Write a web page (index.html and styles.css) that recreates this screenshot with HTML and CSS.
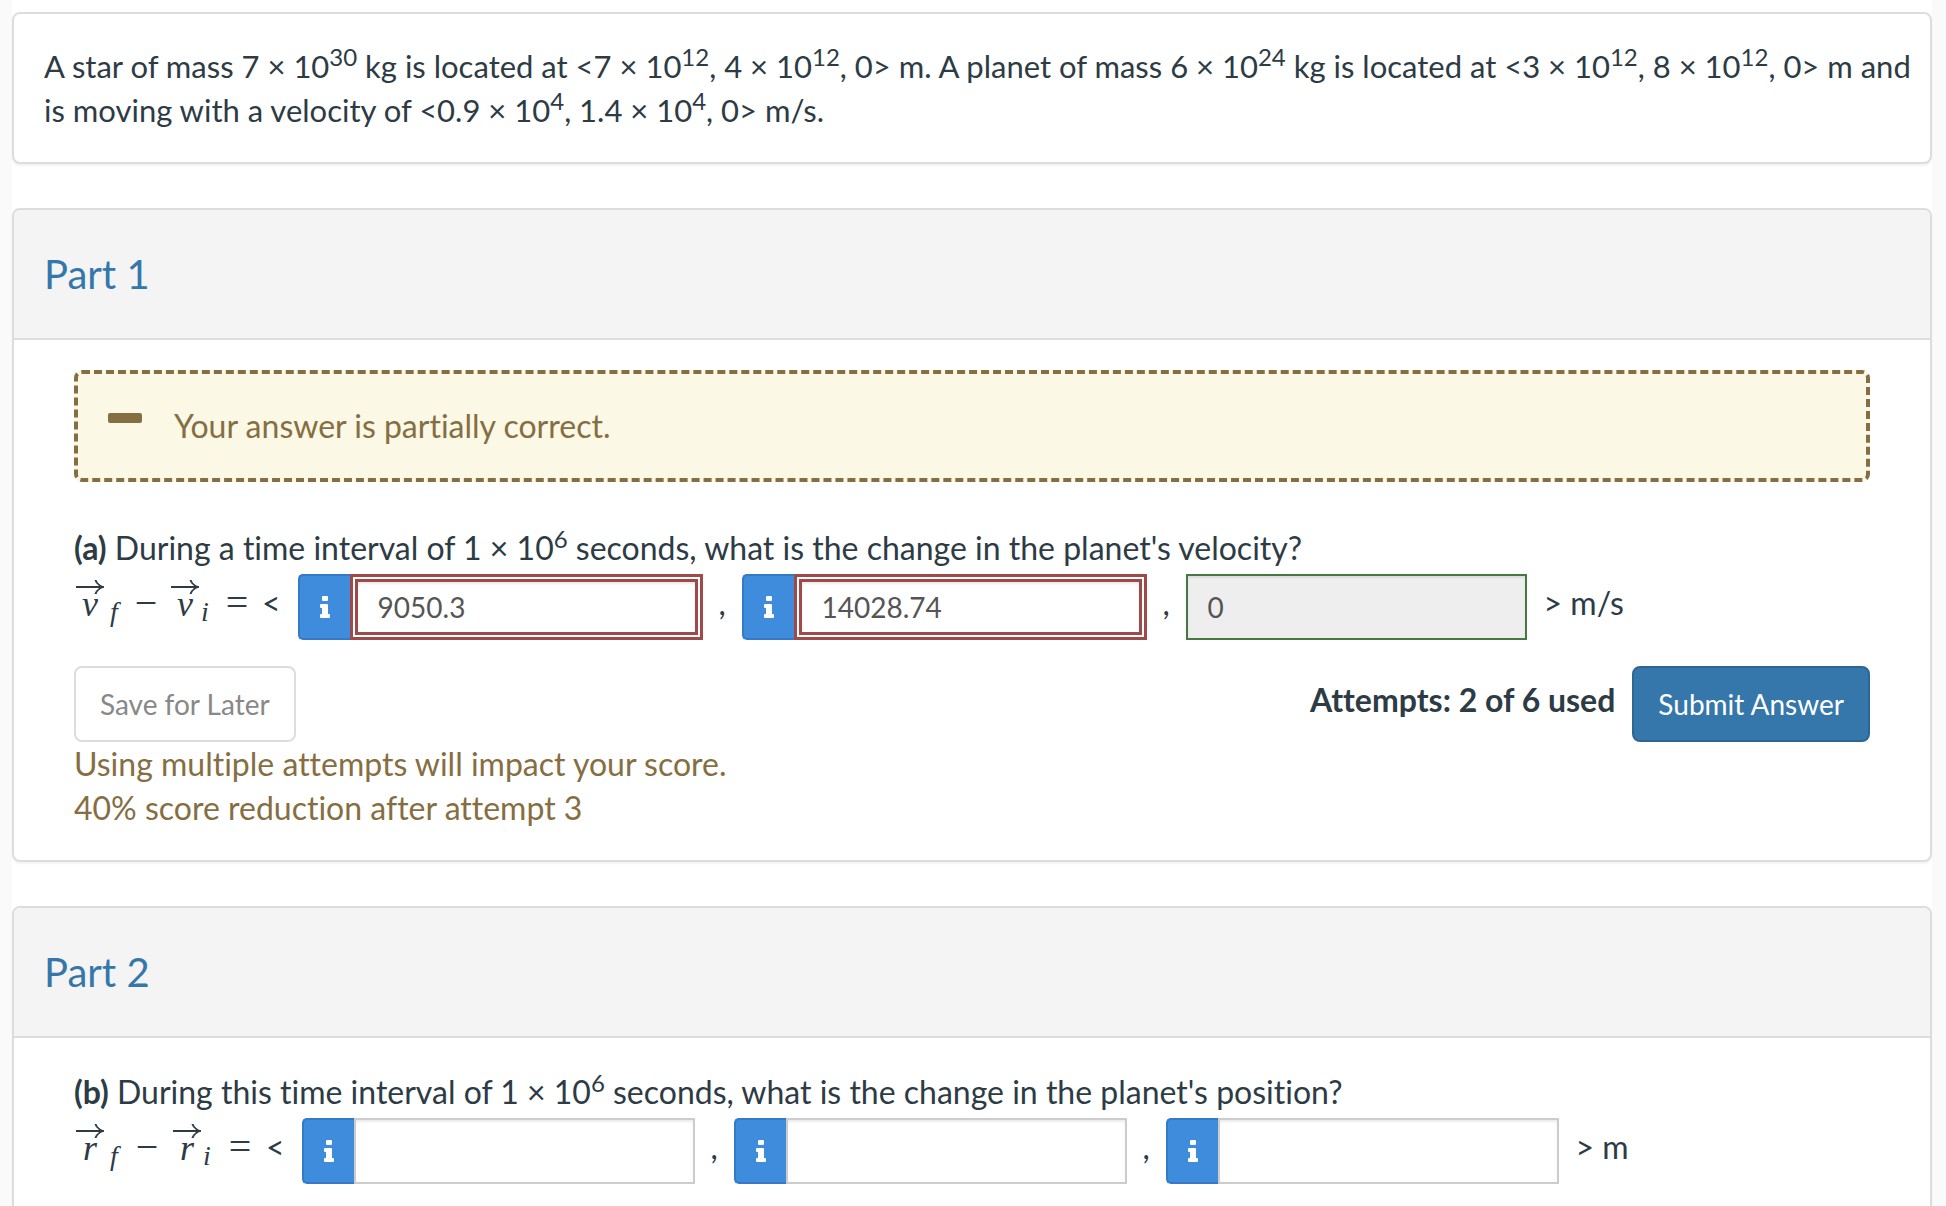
FILE: index.html
```html
<!DOCTYPE html>
<html lang="en">
<head>
<meta charset="utf-8">
<meta name="viewport" content="width=device-width, initial-scale=1">
<title>Planet and star</title>
<link rel="stylesheet" href="styles.css">
</head>
<body>
<svg class="defs" aria-hidden="true">
  <symbol id="arrow" viewBox="0 0 28 14">
    <path d="M0 7H26" fill="none" stroke="currentColor" stroke-width="2"/>
    <path d="M19 0C20 3 22 6 28 7C22 8 20 11 19 14L20 14C21 11 24 8 28 7C24 6 21 3 20 0Z" fill="currentColor" stroke="currentColor"/>
  </symbol>
  <symbol id="info" viewBox="0 0 10 22">
    <rect x="2" y="0" width="6" height="5" rx="1" fill="currentColor"/>
    <path d="M1 8H7Q8 8 8 9V18H9Q10 18 10 19V21Q10 22 9 22H1Q0 22 0 21V19Q0 18 1 18H2V12H1Q0 12 0 11V9Q0 8 1 8Z" fill="currentColor"/>
  </symbol>
</svg>
<main class="page">
  <section class="card statement">
    <p>A star of mass 7 × 10<sup>30</sup> kg is located at &lt;7 × 10<sup>12</sup>, 4 × 10<sup>12</sup>, 0&gt; m. A planet of mass 6 × 10<sup>24</sup> kg is located at &lt;3 × 10<sup>12</sup>, 8 × 10<sup>12</sup>, 0&gt; m and is moving with a velocity of &lt;0.9 × 10<sup>4</sup>, 1.4 × 10<sup>4</sup>, 0&gt; m/s.</p>
  </section>

  <section class="card">
    <header class="card-header"><h2>Part 1</h2></header>
    <div class="card-body">
      <div class="alert" role="status">
        <span class="alert-icon"></span>
        <p>Your answer is partially correct.</p>
      </div>
      <form class="question">
        <p class="prompt"><strong>(a)</strong> During a time interval of 1 × 10<sup>6</sup> seconds, what is the change in the planet's velocity?</p>
        <div class="answer">
          <span class="vec"><svg class="arrow"><use href="#arrow"/></svg><i>v</i></span><i class="sub">f</i>
          <span class="op">−</span>
          <span class="vec"><svg class="arrow"><use href="#arrow"/></svg><i>v</i></span><i class="sub sub-i">i</i>
          <span class="op">=</span>
          <span class="open">&lt;</span>
          <button type="button" class="info" aria-label="Feedback on x"><svg class="info-icon"><use href="#info"/></svg></button>
          <input class="field wrong" type="text" value="9050.3" aria-label="x component of velocity change">
          <span class="comma">,</span>
          <button type="button" class="info" aria-label="Feedback on y"><svg class="info-icon"><use href="#info"/></svg></button>
          <input class="field wrong" type="text" value="14028.74" aria-label="y component of velocity change">
          <span class="comma">,</span>
          <input class="field right" type="text" value="0" readonly aria-label="z component of velocity change">
          <span class="unit">&gt; m/s</span>
        </div>
        <div class="actions">
          <button type="button" class="btn save">Save for Later</button>
          <strong class="attempts">Attempts: 2 of 6 used</strong>
          <button type="button" class="btn submit">Submit Answer</button>
        </div>
        <p class="warning">Using multiple attempts will impact your score.<br>40% score reduction after attempt 3</p>
      </form>
    </div>
  </section>

  <section class="card card-last">
    <header class="card-header"><h2>Part 2</h2></header>
    <div class="card-body">
      <form class="question">
        <p class="prompt"><strong>(b)</strong> During this time interval of 1 × 10<sup>6</sup> seconds, what is the change in the planet's position?</p>
        <div class="answer answer-position">
          <span class="vec"><svg class="arrow"><use href="#arrow"/></svg><i>r</i></span><i class="sub">f</i>
          <span class="op">−</span>
          <span class="vec"><svg class="arrow"><use href="#arrow"/></svg><i>r</i></span><i class="sub sub-i">i</i>
          <span class="op">=</span>
          <span class="open">&lt;</span>
          <button type="button" class="info" aria-label="Information on x"><svg class="info-icon"><use href="#info"/></svg></button>
          <input class="field" type="text" aria-label="x component of position change">
          <span class="comma">,</span>
          <button type="button" class="info" aria-label="Information on y"><svg class="info-icon"><use href="#info"/></svg></button>
          <input class="field" type="text" aria-label="y component of position change">
          <span class="comma">,</span>
          <button type="button" class="info" aria-label="Information on z"><svg class="info-icon"><use href="#info"/></svg></button>
          <input class="field" type="text" aria-label="z component of position change">
          <span class="unit">&gt; m</span>
        </div>
      </form>
    </div>
  </section>
</main>
</body>
</html>
```

FILE: styles.css
```css
* {
  box-sizing: border-box;
}

body {
  margin: 0;
  padding: 0 14px 0 12px;
  background: #fafafa;
  color: #2d3b45;
  font: 32px/44px Lato, sans-serif;
  font-variant-ligatures: none;
  text-rendering: optimizeLegibility;
}

p, h2 {
  margin: 0;
}

strong {
  font-weight: 700;
}

sup {
  font-size: 24px;
  line-height: 0;
  vertical-align: 12px;
}

.defs {
  display: none;
}

.page {
  display: flex;
  flex-direction: column;
  gap: 44px;
  min-height: 100vh;
  padding-top: 12px;
  background: #fff;
}

.card {
  border: 2px solid #ddd;
  border-radius: 8px;
  background: #fff;
  box-shadow: 0 2px 2px rgba(0, 0, 0, 0.05);
}

.card-last {
  flex: 1;
  border-bottom: 0;
  border-radius: 8px 8px 0 0;
}

.statement {
  padding: 30px 10px 30px 30px;
  font-size: 31px;
}

.card-header {
  padding: 42px 30px;
  border-bottom: 2px solid #ddd;
  border-radius: 6px 6px 0 0;
  background: #f4f4f4;
}

.card-header h2 {
  color: #3577aa;
  font-size: 40px;
  font-weight: 400;
  line-height: 44px;
}

.card-body {
  padding: 30px 60px;
}

.alert {
  display: flex;
  align-items: center;
  gap: 32px;
  height: 112px;
  margin-bottom: 42px;
  padding: 0 30px;
  border: 4px dashed #856e42;
  border-radius: 8px;
  background: #fbf8e5;
  color: #856e42;
}

.alert-icon {
  width: 34px;
  height: 10px;
  margin-bottom: 16px;
  border-radius: 2px;
  background: currentColor;
}

.prompt {
  padding: 2px 0 4px;
}

.answer {
  display: flex;
  align-items: flex-start;
  height: 66px;
  padding-left: 2px;
  line-height: 58px;
}

.vec {
  display: flex;
  flex-direction: column;
  align-items: center;
  padding-top: 6px;
  font: 36px/20px "Liberation Serif", serif;
}

.arrow {
  width: 28px;
  height: 14px;
}

.sub {
  width: 22px;
  padding: 18px 0 0 6px;
  font: italic 28px/40px "Liberation Serif", serif;
}

.sub-i {
  width: 18px;
  padding-left: 2px;
}

.op {
  width: 40px;
  margin-right: 5px;
  font: 40px/58px "Liberation Serif", serif;
  text-align: center;
}

.answer-position .op {
  width: 42px;
}

.open {
  margin-right: 17px;
}

.unit {
  margin-left: 17px;
}

.comma {
  width: 39px;
  text-align: center;
}

.info {
  display: flex;
  align-items: center;
  justify-content: center;
  width: 52px;
  height: 66px;
  padding: 0;
  border: 2px solid #357ac8;
  border-right: 0;
  border-radius: 5px 0 0 5px;
  background: #3f8bdc;
  color: #fff;
}

.info-icon {
  width: 10px;
  height: 22px;
}

.field {
  width: 341px;
  height: 66px;
  padding: 0 20px;
  border: 2px solid #ccc;
  border-radius: 0;
  background: #fff;
  box-shadow: inset 0 2px 2px rgba(0, 0, 0, 0.08);
  color: #555;
  font: 28px/40px Lato, sans-serif;
}

.wrong {
  width: 353px;
  border: 8px double #9f4a48;
}

.right {
  border-color: #477843;
  background: #eee;
}

.actions {
  display: flex;
  align-items: center;
  margin-top: 26px;
}

.btn {
  height: 76px;
  padding: 0 24px;
  border: 2px solid #ddd;
  border-radius: 8px;
  background: #fff;
  color: #888;
  font: 28px/40px Lato, sans-serif;
  font-variant-ligatures: none;
  text-rendering: inherit;
}

.attempts {
  margin: 0 17px 8px auto;
}

.submit {
  border-color: #2f6592;
  background: #3577aa;
  color: #fff;
}

.warning {
  color: #856e42;
}
```
